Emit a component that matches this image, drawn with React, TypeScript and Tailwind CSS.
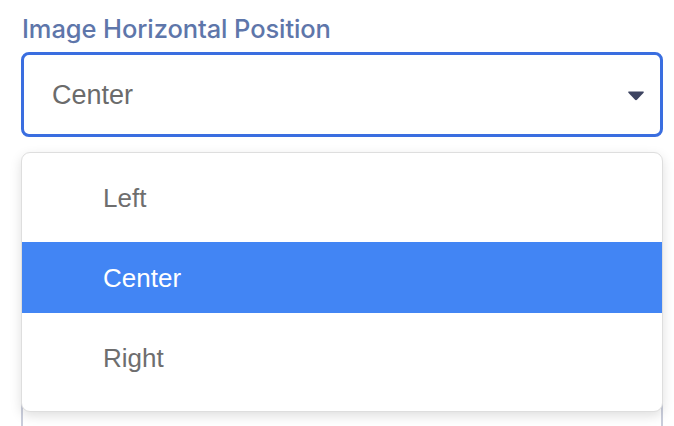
import { useState } from 'react'

const options = ['Left', 'Center', 'Right']

export default function App() {
  const [value] = useState('Center')
  return (
    <div className="relative h-[426px] w-[674px] overflow-hidden bg-white font-['Liberation_Sans',Arial,sans-serif]">
      <div className="pl-[21px] pr-[11px] pt-[14px]">
        <label className="block font-['Inter',sans-serif] text-[25.5px] leading-[30px] font-medium tracking-[-0.1px] text-[#5e76aa] pl-[1px]">
          Image Horizontal Position
        </label>
        <div className="mt-[8px] flex h-[85px] items-center justify-between rounded-[8px] border-[3px] border-[#3a6ee0] pl-[28px] pr-[14px]">
          <span className="mt-[1px] text-[27px] text-[#6b6b6b]">{value}</span>
          <svg width="18" height="11" viewBox="0 0 18 11" className="mr-[1px] mt-[1px]">
            <path d="M2 1.5 H16 Q17.5 1.5 16.6 2.8 L10.2 9.6 Q9 10.8 7.8 9.6 L1.4 2.8 Q0.5 1.5 2 1.5 Z" fill="#3d4461" />
          </svg>
        </div>
        {/* next field, sits under the open menu */}
        <div className="mt-[30px] h-[300px] rounded-[8px] border-2 border-[#c9cddb] bg-white" />
      </div>

      <div className="absolute left-[21px] top-[152px] w-[642px] rounded-[9px] border border-[#dedede] bg-white pt-[6px] pb-[12px] shadow-[0_4px_12px_rgba(0,0,0,0.13)]">
        {options.map((o) => (
          <div key={o} className="pt-[3px] pb-[6px]">
            <div
              className={`flex h-[71px] items-center pl-[81px] pt-[2px] text-[26px] ${
                o === value ? 'bg-[#4285f4] text-white' : 'text-[#6e6e6e]'
              }`}
            >
              {o}
            </div>
          </div>
        ))}
      </div>
    </div>
  )
}
